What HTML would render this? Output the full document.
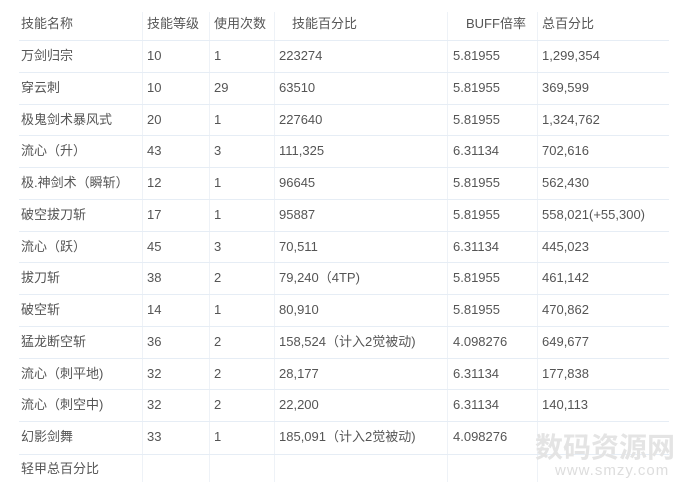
<!DOCTYPE html>
<html><head><meta charset="utf-8"><style>
body{margin:0;width:691px;height:487px;background:#fff;overflow:hidden;position:relative;font-family:"Liberation Sans","Noto Sans CJK SC",sans-serif;color:#555;font-size:13px}
.h{position:absolute;left:19px;width:650px;height:1px;background:#e6edf5}
.v{position:absolute;top:12px;height:470px;width:1px;background:#eef2f7}
.r{position:absolute;left:0;height:32px;line-height:32px;width:691px}
.r span{position:absolute;white-space:nowrap}
.wm{position:absolute;color:#e4e4e4;font-weight:bold;white-space:nowrap}
</style></head><body>
<div class="v" style="left:142px"></div><div class="v" style="left:209px"></div><div class="v" style="left:274px"></div><div class="v" style="left:447px"></div><div class="v" style="left:537px"></div>
<div id="rows"></div>
<script>
var d=[["技能名称","技能等级","使用次数","　技能百分比","　BUFF倍率","总百分比"],
["万剑归宗","10","1","223274","5.81955","1,299,354"],
["穿云刺","10","29","63510","5.81955","369,599"],
["极鬼剑术暴风式","20","1","227640","5.81955","1,324,762"],
["流心（升）","43","3","111,325","6.31134","702,616"],
["极.神剑术（瞬斩）","12","1","96645","5.81955","562,430"],
["破空拔刀斩","17","1","95887","5.81955","558,021(+55,300)"],
["流心（跃）","45","3","70,511","6.31134","445,023"],
["拔刀斩","38","2","79,240（4TP)","5.81955","461,142"],
["破空斩","14","1","80,910","5.81955","470,862"],
["猛龙断空斩","36","2","158,524（计入2觉被动)","4.098276","649,677"],
["流心（刺平地)","32","2","28,177","6.31134","177,838"],
["流心（刺空中)","32","2","22,200","6.31134","140,113"],
["幻影剑舞","33","1","185,091（计入2觉被动)","4.098276",""],
["轻甲总百分比","","","","",""]];
var xs=[21,147,214,279,453,542],h="";
for(var i=0;i<d.length;i++){var y=i==0?8:40+(i-1)*31.75;h+='<div class="r" style="top:'+y+'px">';for(var j=0;j<6;j++)h+='<span style="left:'+xs[j]+'px">'+d[i][j]+'</span>';h+='</div>';
if(i>0&&i<14)h+='<div class="h" style="top:'+(40+(i-1)*31.75)+'px"></div>';}
h+='<div class="h" style="top:40px"></div><div class="h" style="top:454px"></div>';
document.getElementById('rows').innerHTML=h;
</script>
<div class="wm" style="left:535px;top:426px;font-size:28px;letter-spacing:0px">数码资源网</div>
<div class="wm" style="left:555px;top:462px;font-size:15px;font-weight:normal;color:#ddd;letter-spacing:1px">www.smzy.com</div>
</body></html>
